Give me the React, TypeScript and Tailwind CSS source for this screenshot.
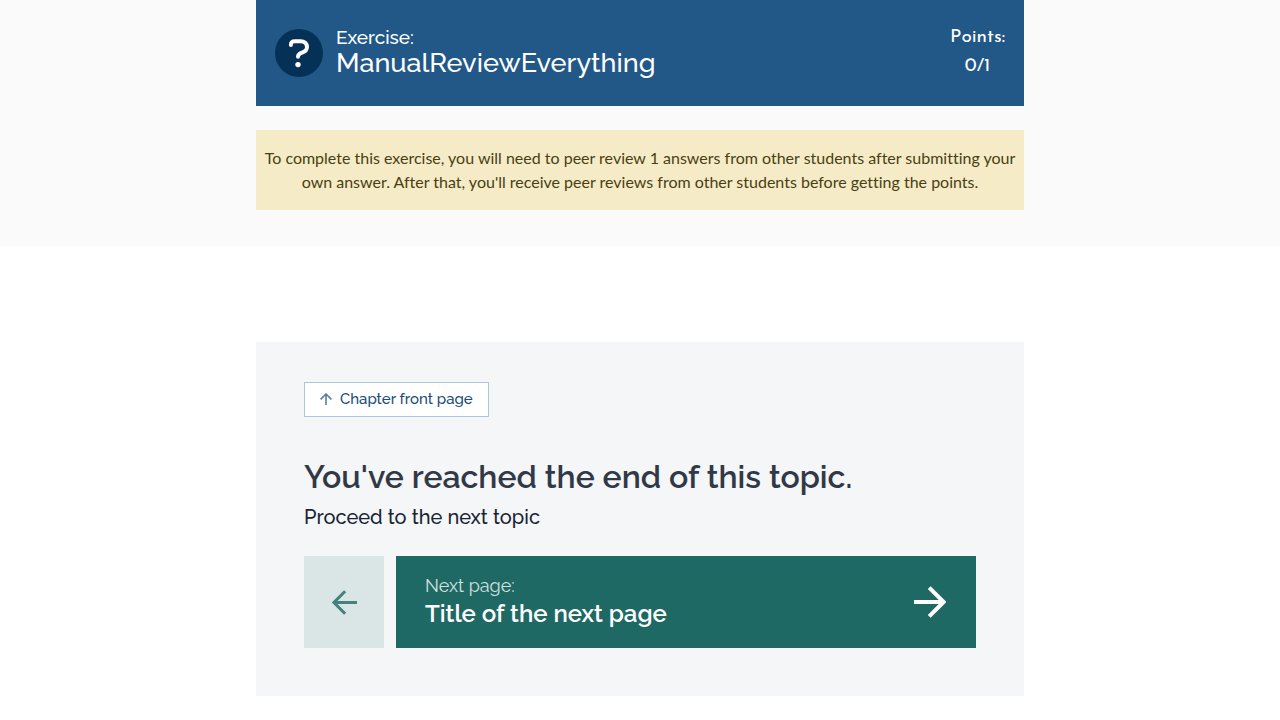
function QuestionIcon() {
  return (
    <svg viewBox="0 0 48 48" className="size-12 shrink-0" fill="none" aria-hidden="true">
      <circle cx="24" cy="24" r="24" fill="#063157" />
      <path
        d="M15.9 16C15.9 13.3 17 12.2 20 12.2H25.5C29.5 12.2 32 14.6 32 18C32 21.2 30 22.6 27 23.7C24 24.8 23 25.6 23 27.8"
        stroke="#fff"
        strokeWidth="4"
        strokeLinecap="round"
      />
      <circle cx="23" cy="35.6" r="2.7" fill="#fff" />
    </svg>
  );
}

function ArrowRight({ className }: { className: string }) {
  return (
    <svg viewBox="0 0 32 32" className={className} fill="none" stroke="currentColor" aria-hidden="true">
      <path d="M0 16H29M15.2 1.6L29.6 16L15.2 30.4" strokeWidth="4" />
    </svg>
  );
}

export default function App() {
  return (
    <div className="min-h-screen bg-white font-['Raleway','Lato',sans-serif]">
      <section className="bg-[#fafafa] pb-9">
        <div className="mx-auto max-w-3xl">
          <header className="flex items-center bg-[#215887] px-[19px] py-[23px] text-white">
            <QuestionIcon />
            <h2 className="ml-[13px] grow font-medium">
              <span className="block text-[19px] leading-6">Exercise:</span>
              <span className="block pb-1 text-[27px] leading-7">ManualReviewEverything</span>
            </h2>
            <div className="pb-[2px] text-center font-['Josefin_Sans','Lato',sans-serif] text-[19px] leading-[29px]">
              <div>Points:</div>
              <div>0/1</div>
            </div>
          </header>
          <p className="mt-6 bg-[#f5ecc7] px-2 py-4 text-center font-['Lato',sans-serif] text-base leading-6 text-[#493f13] [font-variant-ligatures:none]">
            To complete this exercise, you will need to peer review 1 answers from other students after submitting your
            own answer. After that, you'll receive peer reviews from other students before getting the points.
          </p>
        </div>
      </section>

      <nav aria-label="Topic navigation" className="mx-auto mt-24 max-w-3xl bg-[#f4f6f8] px-12 pt-10 pb-12">
        <a
          href="#chapter"
          className="inline-flex h-[35px] items-center gap-2 border border-[#b0c4dc] bg-white px-[15px] pb-[2px] text-[15px] leading-5 font-medium text-[#1a4c78]"
        >
          <svg viewBox="0 0 12 12" className="size-3 shrink-0" fill="none" stroke="#5680a3" strokeWidth="1.6" aria-hidden="true">
            <path d="M6 12V1M0.6 6.4L6 1L11.4 6.4" />
          </svg>
          Chapter front page
        </a>
        <h2 className="mt-9 text-[32px] leading-[48px] font-semibold text-[#313947]">
          You've reached the end of this topic.
        </h2>
        <p className="text-[20px] leading-8 font-medium text-[#1a2333]">Proceed to the next topic</p>
        <div className="mt-[23px] flex gap-3">
          <a
            href="#previous"
            aria-label="Previous page"
            className="flex w-20 shrink-0 items-center justify-center bg-[#dae6e5] text-[#44827e]"
          >
            <ArrowRight className="size-[25px] rotate-180" />
          </a>
          <a
            href="#next"
            className="flex h-[92px] grow items-center justify-between bg-[#1f6964] pr-[30px] pl-[29px] text-white"
          >
            <span>
              <span className="block text-[18px] leading-6 text-[#d2e1e0]">Next page:</span>
              <span className="block text-[24px] leading-8 font-semibold">Title of the next page</span>
            </span>
            <ArrowRight className="size-8" />
          </a>
        </div>
      </nav>
    </div>
  );
}
